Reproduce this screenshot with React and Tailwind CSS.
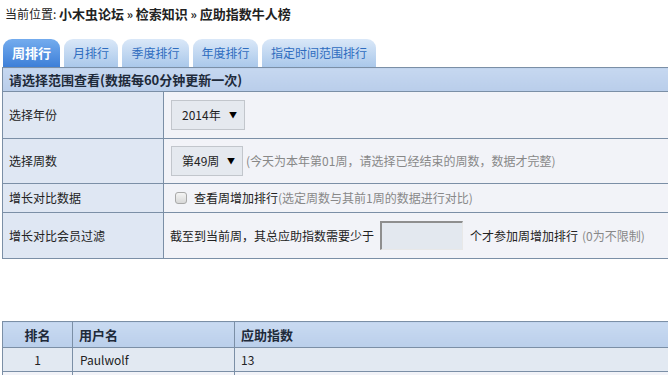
import React from "react";

const F = { fontFamily: '"Noto Sans CJK SC", "Liberation Sans", sans-serif' };

function Tab({ label, w, active }) {
  return (
    <div
      className={`${w} h-[28px] rounded-t-[9px] flex items-center justify-center leading-[14px] ${
        active
          ? "bg-gradient-to-b from-[#74acee] to-[#3d7fd8] text-white font-bold text-[13px]"
          : "bg-gradient-to-b from-[#dae8f8] to-[#aac8ea] text-[#2e6cbf] text-[12px]"
      }`}
    >
      {label}
    </div>
  );
}

function Select({ text, w }) {
  return (
    <div className={`${w} h-[30px] border border-[#c2c6cc] bg-[#e5e9ef] flex items-center justify-between pl-[10px] pr-[7px] text-[12px] text-[#222]`}>
      <span>{text}</span>
      <span className="text-[8px] text-black">▼</span>
    </div>
  );
}

export default function App() {
  const bd = "border border-[#7b8fa6]";
  return (
    <div className="w-[668px] h-[375px] overflow-hidden bg-white text-[#222]" style={F}>
      <div className="pt-[7px] pl-[5px] text-[12px] leading-[14px] whitespace-nowrap">
        <span>当前位置: </span>
        <b className="text-[13px]">小木虫论坛</b>
        <b> » </b>
        <b className="text-[13px]">检索知识</b>
        <b> » </b>
        <b className="text-[13px]">应助指数牛人榜</b>
      </div>

      <div className="mt-[18px] pl-[3px] flex gap-[4px]">
        <Tab label="周排行" w="w-[57px]" active />
        <Tab label="月排行" w="w-[54px]" />
        <Tab label="季度排行" w="w-[67px]" />
        <Tab label="年度排行" w="w-[65px]" />
        <Tab label="指定时间范围排行" w="w-[114px]" />
      </div>

      <div className="pl-[2px] w-[720px]">
        <table className="border-collapse table-fixed w-[710px] text-[12px] leading-[14px]">
          <colgroup>
            <col className="w-[161px]" />
            <col />
          </colgroup>
          <tbody>
            <tr className="h-[24px]">
              <td colSpan={2} className={`${bd} bg-gradient-to-b from-[#c6d8f0] to-[#b9cdea] pl-[6px] font-bold text-[13px] text-[#1e2a3a]`}>
                请选择范围查看(数据每60分钟更新一次)
              </td>
            </tr>
            <tr className="h-[47px]">
              <td className={`${bd} bg-[#dfe7f3] pl-[6px]`}>选择年份</td>
              <td className={`${bd} bg-[#f2f3f8] pl-[7px]`}>
                <Select text="2014年" w="w-[74px]" />
              </td>
            </tr>
            <tr className="h-[45px]">
              <td className={`${bd} bg-[#dfe7f3] pl-[6px]`}>选择周数</td>
              <td className={`${bd} bg-[#f2f3f8] pl-[7px]`}>
                <div className="flex items-center">
                  <Select text="第49周" w="w-[72px]" />
                  <span className="ml-[3px] text-[#888] whitespace-nowrap">(今天为本年第01周，请选择已经结束的周数，数据才完整)</span>
                </div>
              </td>
            </tr>
            <tr className="h-[29px]">
              <td className={`${bd} bg-[#dfe7f3] pl-[6px]`}>增长对比数据</td>
              <td className={`${bd} bg-[#f2f3f8] pl-[11px]`}>
                <div className="flex items-center whitespace-nowrap">
                  <span className="w-[12px] h-[12px] rounded-[3px] border border-[#a9a9a9] bg-gradient-to-b from-[#f4f4f4] to-[#d8d8d8]" />
                  <span className="ml-[7px]">查看周增加排行</span>
                  <span className="text-[#888]">(选定周数与其前1周的数据进行对比)</span>
                </div>
              </td>
            </tr>
            <tr className="h-[46px]">
              <td className={`${bd} bg-[#dfe7f3] pl-[6px]`}>增长对比会员过滤</td>
              <td className={`${bd} bg-[#f2f3f8] pl-[6px]`}>
                <div className="flex items-center whitespace-nowrap">
                  <span>截至到当前周，其总应助指数需要少于</span>
                  <span className="ml-[6px] w-[83px] h-[29px] bg-[#e3e8ef] border-t-2 border-l-2 border-t-[#8e8e8e] border-l-[#8e8e8e] border-r border-b border-r-[#e8e8e8] border-b-[#e8e8e8]" />
                  <span className="ml-[7px]">个才参加周增加排行</span>
                  <span className="ml-[4px] text-[#888]">(0为不限制)</span>
                </div>
              </td>
            </tr>
          </tbody>
        </table>

        <table className="mt-[62px] border-collapse table-fixed w-[710px] text-[12px] leading-[14px]">
          <colgroup>
            <col className="w-[70px]" />
            <col className="w-[162px]" />
            <col />
          </colgroup>
          <tbody>
            <tr className="h-[26px]">
              <td className={`${bd} bg-gradient-to-b from-[#c9daf1] to-[#bacfeb] text-center font-bold text-[13px] text-[#1e2a3a]`}>排名</td>
              <td className={`${bd} bg-gradient-to-b from-[#c9daf1] to-[#bacfeb] pl-[6px] font-bold text-[13px] text-[#1e2a3a]`}>用户名</td>
              <td className={`${bd} bg-gradient-to-b from-[#c9daf1] to-[#bacfeb] pl-[6px] font-bold text-[13px] text-[#1e2a3a]`}>应助指数</td>
            </tr>
            <tr className="h-[24px]">
              <td className={`${bd} bg-[#e2e9f2] text-center`}>1</td>
              <td className={`${bd} bg-[#e2e9f2] pl-[7px]`}>Paulwolf</td>
              <td className={`${bd} bg-[#e2e9f2] pl-[6px]`}>13</td>
            </tr>
            <tr className="h-[24px]">
              <td className={`${bd} bg-[#f2f3f8]`}></td>
              <td className={`${bd} bg-[#f2f3f8]`}></td>
              <td className={`${bd} bg-[#f2f3f8]`}></td>
            </tr>
          </tbody>
        </table>
      </div>
    </div>
  );
}
